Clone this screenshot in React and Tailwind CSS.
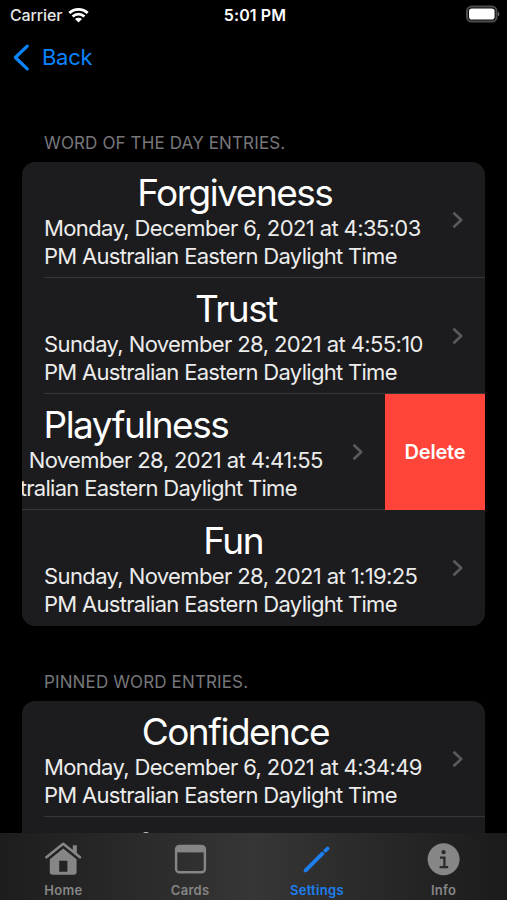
import React from "react";

const wordEntries = [
    { word: "Forgiveness", line1: "Monday, December 6, 2021 at 4:35:03" },
    { word: "Trust", line1: "Sunday, November 28, 2021 at 4:55:10" },
    { word: "Playfulness", line1: "Sunday, November 28, 2021 at 4:41:55", swiped: true },
    { word: "Fun", line1: "Sunday, November 28, 2021 at 1:19:25" },
];

const pinnedEntries = [
    { word: "Confidence", line1: "Monday, December 6, 2021 at 4:34:49" },
];

function StatusBar() {
    return (
        <div className="grid grid-cols-3 items-center h-[30px] pl-[10px] pr-[7px] text-white text-[16px]">
            <div className="flex items-center gap-[6px]">
                <span className="tracking-[-0.15px] font-medium text-[#e6e6e6]">Carrier</span>
                <svg className="w-[21px] h-[16px] -mt-px" viewBox="0 0 21 16" fill="none">
                    <path d="M1.3 6.1C6.4 1.1 14.6 1.1 19.7 6.1" stroke="white" strokeWidth="2.8" />
                    <path d="M4.6 9.5C7.9 6.4 13.1 6.4 16.4 9.5" stroke="white" strokeWidth="2.8" />
                    <path d="M10.5 15.6L7 12.1C9 10.4 12 10.4 14 12.1Z" fill="white" />
                </svg>
            </div>
            <span className="text-center font-semibold tracking-[0.1px]">5:01 PM</span>
            <svg className="w-[34px] h-[18px] justify-self-end -mt-[2px]" viewBox="0 0 34 18">
                <rect x="1" y="1.6" width="29.6" height="15" rx="4.6" fill="#0a0a0a" stroke="#4c4c4c" strokeWidth="2" />
                <rect x="3" y="3.6" width="25.6" height="11" rx="2.8" fill="white" />
                <path d="M32 6.8c1.9 .8 1.9 3.8 0 4.6z" fill="#6a6a6a" />
            </svg>
        </div>
    );
}

function Chevron() {
    return (
        <svg className="w-[11px] h-[18px]" viewBox="0 0 11 18" fill="none">
            <path d="M1.5 1.8L9.2 9L1.5 16.2" stroke="#5a5a5e" strokeWidth="2.6" strokeLinejoin="round" />
        </svg>
    );
}

function EntryRow({ entry, last }) {
    return (
        <div className="flex h-[116px] shrink-0 overflow-hidden">
            <div
                className={`relative w-[463px] shrink-0 flex items-center justify-between pl-[22px] pr-[22px] pb-px ${
                    entry.swiped ? "-ml-[100px]" : ""
                }`}
            >
                <div className="whitespace-nowrap text-white">
                    <p className="text-center text-[37px] leading-[42px] pt-[2px] pl-[5px] tracking-[-1.5px]">{entry.word}</p>
                    <p className="text-[22px] leading-[28px] tracking-[-0.61px] text-[#ececec]">{entry.line1}</p>
                    <p className="text-[22px] leading-[28px] tracking-[-0.7px] text-[#ececec]">
                        PM Australian Eastern Daylight Time
                    </p>
                </div>
                <Chevron />
                {!last && (
                    <div className="absolute bottom-0 right-0 left-[22px] h-px bg-[#363639]"></div>
                )}
            </div>
            {entry.swiped && (
                <button className="w-[100px] shrink-0 bg-[#ff453a] text-white text-[20px] font-semibold tracking-[-0.2px]">
                    Delete
                </button>
            )}
        </div>
    );
}

function Section({ title, entries, children }) {
    return (
        <section className="mx-[22px] shrink-0">
            <h2 className="pl-[22px] h-[29px] text-[17px] leading-[20px] tracking-[0.13px] text-[#77777b]">
                {title}
            </h2>
            <div className="w-[463px] rounded-[13px] bg-[#1c1c1e] overflow-hidden">
                {entries.map((entry, index) => (
                    <EntryRow
                        key={entry.line1}
                        entry={entry}
                        last={!children && index === entries.length - 1}
                    />
                ))}
                {children}
            </div>
        </section>
    );
}

function TabItem({ label, active, children }) {
    return (
        <div
            className={`flex-1 flex flex-col items-center ${
                active ? "text-[#1c7ff0]" : "text-[#868686]"
            }`}
        >
            <svg className="w-[40px] h-[36px] mt-[8px]" viewBox="0 0 40 36" fill="none">
                {children}
            </svg>
            <span className="text-[13px] leading-[16px] mt-[4px] font-semibold tracking-[0.3px]">{label}</span>
        </div>
    );
}

function TabBar() {
    return (
        <nav className="h-[67px] pt-px shrink-0 flex bg-gradient-to-r from-[#1d1d1d] via-[#363636] to-[#1b1b1b]">
            <TabItem label="Home">
                <path d="M3.4 15.2L20.2 1.8L37 15.2" stroke="currentColor" strokeWidth="2.6" strokeLinecap="round" strokeLinejoin="round" />
                <path d="M29.8 3.2H33.8V12.5L29.8 9.3Z" fill="currentColor" />
                <path
                    d="M20.2 6.4L33.6 17.2V30Q33.6 32.8 30.9 32.8H9.5Q6.8 32.8 6.8 30V17.2ZM16.2 18.8V29.8H24.4V18.8Z"
                    fill="currentColor"
                    fillRule="evenodd"
                />
            </TabItem>
            <TabItem label="Cards">
                <rect x="6.1" y="3.9" width="28.8" height="26.4" rx="3.4" stroke="currentColor" strokeWidth="2.4" />
                <path d="M6 5h29v5.4H6z" fill="currentColor" />
            </TabItem>
            <TabItem label="Settings" active>
                <path d="M9.4 27.6L26.4 10.6" stroke="currentColor" strokeWidth="3.8" />
                <path d="M7 30L8 26.2L10.8 29Z" fill="currentColor" stroke="currentColor" strokeLinejoin="round" />
                <path d="M28.4 8.6L30.6 6.6" stroke="currentColor" strokeWidth="3.8" strokeLinecap="round" />
            </TabItem>
            <TabItem label="Info">
                <circle cx="19.6" cy="17.3" r="16" fill="currentColor" />
                <circle cx="19.6" cy="10.2" r="2.1" fill="#2b2b2b" />
                <path d="M16 15.6H20.4V25.2M15.6 25.2H24.2" stroke="#2b2b2b" strokeWidth="2.3" />
            </TabItem>
        </nav>
    );
}

function App() {
    return (
        <div className="relative w-full h-[900px] flex flex-col bg-black overflow-hidden font-['Inter',sans-serif]">
            <StatusBar />

            {/* Navigation */}
            <header className="flex items-center h-[56px] pl-[13px] pb-px gap-[13px] text-[#0a84ff]">
                <svg className="w-[16px] h-[27px]" viewBox="0 0 16 27" fill="none">
                    <path d="M14.2 2.2L2.4 13.5L14.2 24.8" stroke="currentColor" strokeWidth="3.2" strokeLinecap="round" strokeLinejoin="round" />
                </svg>
                <span className="text-[22px] tracking-[-0.3px]">Back</span>
            </header>

            <main className="flex-1 min-h-0 overflow-hidden pt-[47px] flex flex-col gap-[46px]">
                <Section title="WORD OF THE DAY ENTRIES." entries={wordEntries} />
                <Section title="PINNED WORD ENTRIES." entries={pinnedEntries}>
                    {/* next row, only the tip of its title clears the tab bar */}
                    <div className="h-[116px] pt-[15px] pl-[120px]">
                        <div className="w-[8px] h-[4px] rounded-t-full bg-[#c8c8c8]"></div>
                    </div>
                </Section>
            </main>

            <TabBar />
        </div>
    );
}

export default App;
